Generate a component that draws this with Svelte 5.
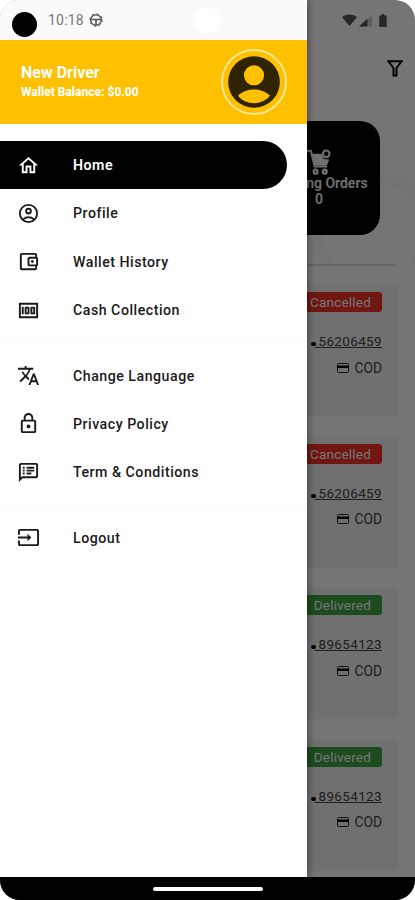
<script lang="ts">
	type Item = { label: string; icon: string; active?: boolean };

	const groups: Item[][] = [
		[
			{
				label: 'Home',
				icon: 'M12 5.69l5 4.5V18h-2v-6H9v6H7v-7.81l5-4.5M12 3L2 12h3v8h6v-6h2v6h6v-8h3L12 3z',
				active: true
			},
			{
				label: 'Profile',
				icon: 'M12 2a10 10 0 1 0 0 20 10 10 0 0 0 0-20zM7.35 18.5C8.66 17.56 10.26 17 12 17s3.34.56 4.65 1.5C15.34 19.44 13.74 20 12 20s-3.34-.56-4.65-1.5zm10.79-1.38a9.95 9.95 0 0 0-12.28 0A7.96 7.96 0 0 1 4 12c0-4.42 3.58-8 8-8s8 3.58 8 8c0 1.95-.7 3.73-1.86 5.12zM12 6a3.5 3.5 0 1 0 0 7 3.5 3.5 0 0 0 0-7zm0 5a1.5 1.5 0 1 1 0-3 1.5 1.5 0 0 1 0 3z'
			},
			{
				label: 'Wallet History',
				icon: 'M21 7.28V5c0-1.1-.9-2-2-2H5a2 2 0 0 0-2 2v14a2 2 0 0 0 2 2h14c1.1 0 2-.9 2-2v-2.28A2 2 0 0 0 22 15V9a2 2 0 0 0-1-1.72zM20 9v6h-7V9h7zM5 19V5h14v2h-6c-1.1 0-2 .9-2 2v6c0 1.1.9 2 2 2h6v2H5zM16 10.5a1.5 1.5 0 1 0 0 3 1.5 1.5 0 0 0 0-3z'
			},
			{
				label: 'Cash Collection',
				icon: 'M5 8h2v8H5zm7 0H9a1 1 0 0 0-1 1v6a1 1 0 0 0 1 1h3a1 1 0 0 0 1-1V9a1 1 0 0 0-1-1zm-1 6h-1v-4h1v4zm7-6h-3a1 1 0 0 0-1 1v6a1 1 0 0 0 1 1h3a1 1 0 0 0 1-1V9a1 1 0 0 0-1-1zm-1 6h-1v-4h1v4zM2 4v16h20V4H2zm2 14V6h16v12H4z'
			}
		],
		[
			{
				label: 'Change Language',
				icon: 'M12.87 15.07l-2.54-2.51.03-.03A17.52 17.52 0 0 0 14.07 6H17V4h-7V2H8v2H1v1.99h11.17C11.5 7.92 10.44 9.75 9 11.35 8.07 10.32 7.3 9.19 6.69 8h-2c.73 1.63 1.73 3.17 2.98 4.56l-5.09 5.02L4 19l5-5 3.11 3.11.76-2.04zM18.5 10h-2L12 22h2l1.12-3h4.75L21 22h2l-4.5-12zm-2.62 7l1.62-4.33L19.12 17h-3.24z'
			},
			{
				label: 'Privacy Policy',
				icon: 'M18 8h-1V6c0-2.76-2.24-5-5-5S7 3.24 7 6v2H6c-1.1 0-2 .9-2 2v10c0 1.1.9 2 2 2h12c1.1 0 2-.9 2-2V10c0-1.1-.9-2-2-2zM9 6c0-1.66 1.34-3 3-3s3 1.34 3 3v2H9V6zm9 14H6V10h12v10zm-6-3c1.1 0 2-.9 2-2s-.9-2-2-2-2 .9-2 2 .9 2 2 2z'
			},
			{
				label: 'Term & Conditions',
				icon: 'M4 4h16v12H5.17L4 17.17V4m0-2c-1.1 0-1.99.9-1.99 2L2 22l4-4h14c1.1 0 2-.9 2-2V4c0-1.1-.9-2-2-2H4zm2 10h2v2H6v-2zm0-3h2v2H6V9zm0-3h2v2H6V6zm4 6h5v2h-5v-2zm0-3h8v2h-8V9zm0-3h8v2h-8V6z'
			}
		],
		[
			{
				label: 'Logout',
				icon: 'M21 3.01H3c-1.1 0-2 .9-2 2V9h2V4.99h18v14.03H3V15H1v4.01c0 1.1.9 1.98 2 1.98h18c1.1 0 2-.88 2-1.98v-14c0-1.11-.9-2-2-2zM11 16l4-4-4-4v3H1v2h10v3z'
			}
		]
	];

	const orders = [
		{ status: 'Cancelled', phone: '56206459' },
		{ status: 'Cancelled', phone: '56206459' },
		{ status: 'Delivered', phone: '89654123' },
		{ status: 'Delivered', phone: '89654123' }
	];
</script>

<div class="phone">
	<div class="page">
		<div class="statusicons">
			<svg width="15" height="12" viewBox="0 0 16 13"><path d="M0 3.5C4-.5 12-.5 16 3.5L8 13z" /></svg>
			<svg width="13" height="13" viewBox="0 0 14 13">
				<path d="M14 0v13H0z" opacity=".3" /><path d="M9 4.500v8.500H0z" />
			</svg>
			<svg class="battery" width="8" height="13" viewBox="0 0 8 14"><path d="M2.5 0h3v1.5H8V14H0V1.500h2.500z" /></svg>
		</div>
		<div class="toolbar">
			<svg width="16" height="17" viewBox="0 0 16 17">
				<path d="M1.300 1.200h13.400L9.500 8v7.500h-3V8z" fill="none" stroke="#000" stroke-width="1.900" />
			</svg>
		</div>
		<div class="hero">
			<div class="pending">
				<svg width="26" height="26" viewBox="0 0 26 27" fill="none" stroke="currentColor">
					<path d="M0 1.800h4.500L8.500 18h13" stroke-width="2.200" />
					<path d="M5.500 5h10l2.500 5.500 5.500.5-2 5.500H8.500z" fill="currentColor" stroke="none" />
					<circle cx="20.500" cy="5" r="3.400" stroke-width="2.200" />
					<circle cx="9.500" cy="23.500" r="2" stroke-width="2.400" />
					<circle cx="19" cy="23.500" r="2" stroke-width="2.400" />
				</svg>
				<span>Pending Orders</span>
				<span>0</span>
			</div>
		</div>
		<div class="rule"></div>
		<div class="orders">
			{#each orders as order}
				<div class="order">
					<span class="badge" class:delivered={order.status === 'Delivered'}>{order.status}</span>
					<span class="call">
						<i></i><u>&nbsp;{order.phone}</u>
					</span>
					<span class="cod">
						<svg width="12" height="10" viewBox="0 0 12 10">
							<rect x=".5" y=".5" width="11" height="9" rx="1" fill="none" stroke="#222" />
							<path d="M0 2.500h12v2.500H0z" />
						</svg>
						COD
					</span>
				</div>
			{/each}
		</div>
	</div>
	<div class="scrim"></div>

	<aside class="drawer">
		<div class="statusbar">
			<span class="dot"></span>
			<span class="time">10:18</span>
			<svg width="14" height="14" viewBox="0 0 14 14" fill="none" stroke="#555">
				<circle cx="7" cy="7" r="5.300" stroke-width="1.500" />
				<circle cx="7" cy="7" r="6.300" stroke-width="1" stroke-dasharray="1.800 3.150" />
				<path d="M2 6.500h10M7 7v5" stroke-width="1.700" />
			</svg>
			<span class="camera"></span>
		</div>
		<header>
			<div>
				<h1>New Driver</h1>
				<p>Wallet Balance: $0.00</p>
			</div>
			<div class="avatar">
				<svg width="62" height="62" viewBox="0 0 24 24">
					<path
						d="M12 2a10 10 0 1 0 0 20 10 10 0 0 0 0-20zm0 3.500a3.900 3.900 0 1 1 0 7.800 3.900 3.900 0 0 1 0-7.800zm0 14.700c-2.500 0-4.700-1.100-6.200-2.900C7.400 15.600 10 14.900 12 14.900s4.600.7 6.200 2.400A8 8 0 0 1 12 20.200z"
					/>
				</svg>
			</div>
		</header>
		<nav>
			{#each groups as group}
				<ul>
					{#each group as item (item.label)}
						<li class:active={item.active}>
							<svg width="23" height="23" viewBox="0 0 24 24"><path d={item.icon} /></svg>
							<span>{item.label}</span>
						</li>
					{/each}
				</ul>
			{/each}
		</nav>
	</aside>

	<div class="gesture"><span></span></div>
</div>

<style>
	:global(body) {
		margin: 0;
		background: #fff;
	}

	.phone {
		position: relative;
		width: 415px;
		height: 900px;
		overflow: hidden;
		border-radius: 20px;
		background: #fff;
		font-family: Roboto, sans-serif;
	}

	.page {
		display: flex;
		height: 877px;
		flex-direction: column;
		overflow: hidden;
	}

	.statusicons {
		display: flex;
		height: 40px;
		flex: none;
		box-sizing: border-box;
		align-items: center;
		justify-content: flex-end;
		gap: 2px;
		padding-right: 28px;
		fill: #555;
	}

	.battery {
		margin-left: 5px;
	}

	.toolbar {
		display: flex;
		height: 81px;
		flex: none;
		box-sizing: border-box;
		justify-content: flex-end;
		padding: 20px 12px 0 0;
	}

	.hero {
		display: flex;
		height: 143px;
		flex: none;
		justify-content: flex-end;
		padding-right: 35px;
		background: radial-gradient(circle at 373px 110px, #fff 47px, #f8f8f8 52px, #fff 62px);
	}

	.pending {
		display: flex;
		width: 122px;
		height: 114px;
		box-sizing: border-box;
		flex-direction: column;
		align-items: center;
		padding-top: 28px;
		border-radius: 20px;
		background: #000;
		color: #f4f4f4;
		font-size: 14px;
		font-weight: 600;
		line-height: 16px;
		white-space: nowrap;
	}

	.rule {
		height: 2px;
		flex: none;
		margin: 0 19px;
		background: #dedede;
	}

	.orders {
		display: flex;
		flex-direction: column;
		gap: 20.500px;
		padding: 19px 16px 0;
	}

	.order {
		display: flex;
		height: 131px;
		flex: none;
		box-sizing: border-box;
		flex-direction: column;
		align-items: flex-end;
		padding: 7px 17px 0;
		border-radius: 5px;
		background: #f3f3f3;
	}

	.badge {
		height: 20px;
		padding: 0 11px;
		border-radius: 3px;
		background: #f43328;
		color: #fff;
		font-size: 13.500px;
		letter-spacing: 0.2px;
		line-height: 20px;
	}

	.delivered {
		background: #3fa544;
	}

	.call {
		display: flex;
		align-items: baseline;
		margin-top: 19px;
		color: #444;
		font-size: 13.500px;
		letter-spacing: 0.35px;
		line-height: 20px;
	}

	.call i {
		width: 5px;
		height: 4px;
		margin-right: -1px;
		border-radius: 2px;
		background: #000;
	}

	.cod {
		display: flex;
		align-items: center;
		gap: 5px;
		margin-top: 6.500px;
		color: #444;
		font-size: 13.800px;
		line-height: 20px;
	}

	.scrim {
		position: absolute;
		inset: 0;
		background: rgba(0, 0, 0, 0.54);
	}

	.drawer {
		position: absolute;
		top: 0;
		left: 0;
		width: 307px;
		height: 877px;
		background: #fff;
		box-shadow: 0 0 9px rgba(0, 0, 0, 0.5);
	}

	.statusbar {
		display: flex;
		height: 40px;
		align-items: center;
		background: #fafafa;
	}

	.dot {
		width: 25px;
		height: 25px;
		margin: 9px 11px 0 12px;
		border-radius: 50%;
		background: #000;
	}

	.time {
		width: 41px;
		color: #777;
		font-size: 14px;
		letter-spacing: 0.2px;
	}

	.camera {
		width: 25px;
		height: 25px;
		margin-left: 92px;
		border-radius: 50%;
		background: #fff;
	}

	header {
		display: flex;
		height: 84px;
		box-sizing: border-box;
		align-items: center;
		justify-content: space-between;
		padding: 0 20px 0 21px;
		background: #ffc000;
		color: #fff;
	}

	h1 {
		margin: 0;
		font-size: 16px;
		font-weight: 700;
		line-height: 20px;
	}

	header p {
		margin: 0;
		font-size: 12px;
		font-weight: 800;
		line-height: 19px;
	}

	.avatar {
		display: grid;
		width: 62px;
		height: 62px;
		place-items: center;
		border: 2px solid #ffe79a;
		border-radius: 50%;
		fill: #302400;
	}

	nav {
		padding-top: 17px;
	}

	ul {
		margin: 0;
		padding: 0;
		list-style: none;
	}

	ul + ul {
		margin: 8px 0 0;
		padding-top: 8.300px;
		border-top: 1px solid #fafafa;
	}

	li {
		display: flex;
		height: 48.300px;
		box-sizing: border-box;
		align-items: center;
		gap: 33px;
		margin-right: 20px;
		padding-left: 17px;
		color: #1a1a1a;
		fill: currentColor;
		font-size: 14.200px;
		font-weight: 500;
		letter-spacing: 0.5px;
	}

	.active {
		border-radius: 0 24px 24px 0;
		background: #000;
		color: #fff;
		font-weight: 600;
	}

	.gesture {
		position: absolute;
		right: 0;
		bottom: 0;
		left: 0;
		display: grid;
		height: 23px;
		place-items: center;
		background: #000;
	}

	.gesture span {
		width: 110px;
		height: 4px;
		border-radius: 2px;
		background: #fff;
	}
</style>
